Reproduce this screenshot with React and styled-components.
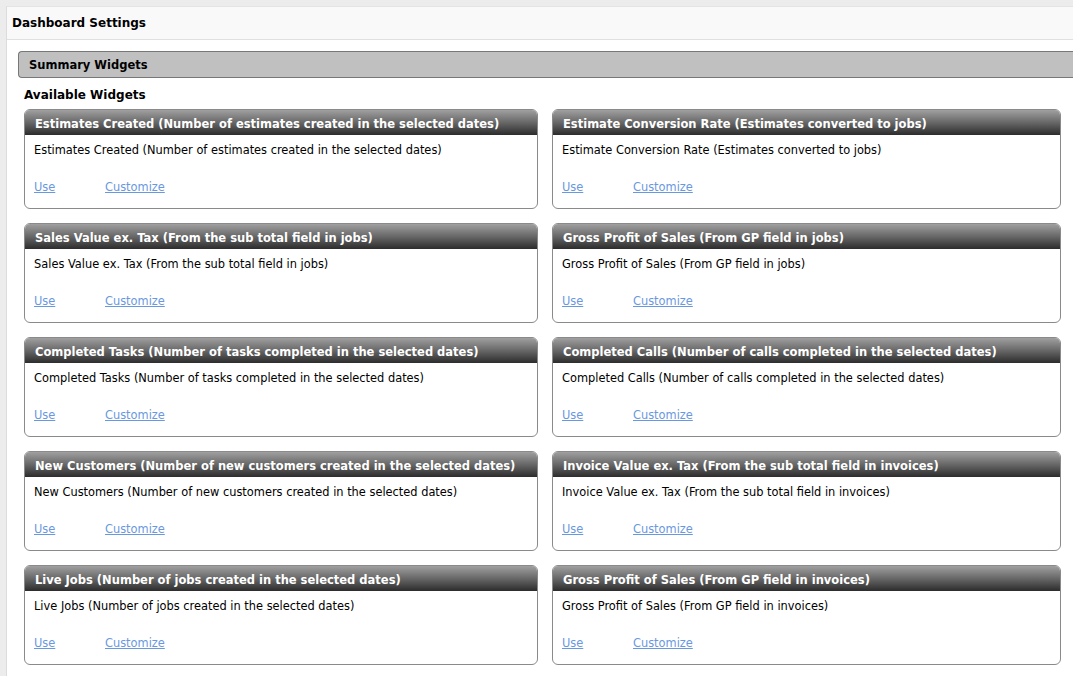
import React from 'react'
import styled, { createGlobalStyle } from 'styled-components'

const GlobalStyle = createGlobalStyle`
  html, body {
    margin: 0;
    padding: 0;
    background: #ececec;
  }
  body {
    font-family: "DejaVu Sans", Verdana, sans-serif;
    font-size: 11.5px;
    color: #000;
  }
`

const Page = styled.div`
  padding: 6px 0 0 6px;
  height: 676px;
  box-sizing: border-box;
  overflow: hidden;
`

const Panel = styled.div`
  background: #fff;
  border-left: 1px solid #dcdcdc;
  border-top: 1px solid #e4e4e4;
  height: 100%;
`

const PanelHeader = styled.div`
  height: 32px;
  line-height: 33px;
  padding-left: 5px;
  background: #f9f9f9;
  border-bottom: 1px solid #e0e0e0;
  font-weight: bold;
  font-size: 12px;
`

const PanelBody = styled.div`
  padding: 11px 0 0 11px;
`

const SectionBar = styled.div`
  height: 25px;
  line-height: 26px;
  padding-left: 10px;
  background: #c0c0c0;
  border: 1px solid #777;
  border-right: none;
  border-radius: 4px 0 0 4px;
  font-weight: bold;
  font-size: 11.5px;
`

const SubTitle = styled.div`
  margin: 9px 0 0 6px;
  height: 22px;
  line-height: 17px;
  font-weight: bold;
  font-size: 12px;
`

const Grid = styled.div`
  display: grid;
  grid-template-columns: 514px 509px;
  grid-auto-rows: 100px;
  column-gap: 14px;
  row-gap: 14px;
  margin-left: 6px;
`

const Card = styled.div`
  border: 1px solid #8a8a8a;
  border-radius: 6px;
  overflow: hidden;
  display: flex;
  flex-direction: column;
  box-sizing: border-box;
`

const CardHeader = styled.div`
  height: 26px;
  padding: 0 0 0 11px;
  margin: -1px -1px 0;
  display: flex;
  align-items: center;
  padding-top: 3px;
  box-sizing: border-box;
  background: linear-gradient(to bottom, #a4a4a4 0%, #6a6a6a 50%, #2c2c2c 100%);
  color: #fff;
  font-weight: bold;
  font-size: 11.5px;
  white-space: nowrap;
`

const CardBody = styled.div`
  padding: 8px 9px 0;
  flex: 1;
`

const Description = styled.div`
  height: 15px;
  line-height: 15px;
  font-size: 11.4px;
`

const Links = styled.div`
  display: flex;
  margin-top: 22px;
  line-height: 15px;
`

const LinkText = styled.a`
  color: #6a98e0;
  text-decoration: underline;
  font-size: 11.4px;
  width: ${p => p.w}px;
  cursor: pointer;
`

const widgets = [
  'Estimates Created (Number of estimates created in the selected dates)',
  'Estimate Conversion Rate (Estimates converted to jobs)',
  'Sales Value ex. Tax (From the sub total field in jobs)',
  'Gross Profit of Sales (From GP field in jobs)',
  'Completed Tasks (Number of tasks completed in the selected dates)',
  'Completed Calls (Number of calls completed in the selected dates)',
  'New Customers (Number of new customers created in the selected dates)',
  'Invoice Value ex. Tax (From the sub total field in invoices)',
  'Live Jobs (Number of jobs created in the selected dates)',
  'Gross Profit of Sales (From GP field in invoices)',
]

export default function App() {
  return (
    <>
      <GlobalStyle />
      <Page>
        <Panel>
          <PanelHeader>Dashboard Settings</PanelHeader>
          <PanelBody>
            <SectionBar>Summary Widgets</SectionBar>
            <SubTitle>Available Widgets</SubTitle>
            <Grid>
              {widgets.map((w, i) => (
                <Card key={i}>
                  <CardHeader>{w}</CardHeader>
                  <CardBody>
                    <Description>{w}</Description>
                    <Links>
                      <LinkText w={71}>Use</LinkText>
                      <LinkText>Customize</LinkText>
                    </Links>
                  </CardBody>
                </Card>
              ))}
            </Grid>
          </PanelBody>
        </Panel>
      </Page>
    </>
  )
}
